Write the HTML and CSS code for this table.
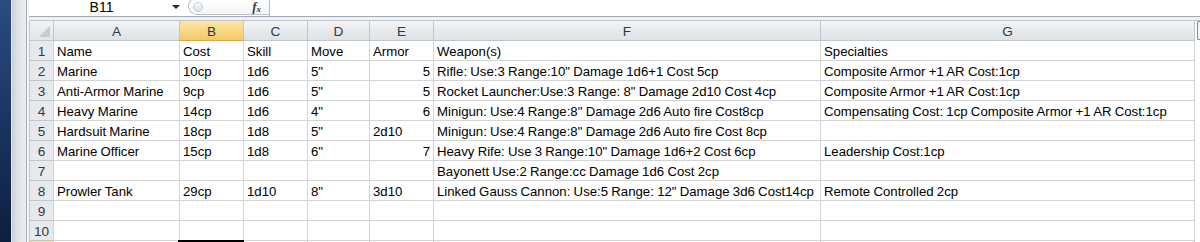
FILE: index.html
```html
<!DOCTYPE html>
<html>
<head>
<meta charset="utf-8">
<link rel="stylesheet" href="styles.css">
</head>
<body>
<div class="window">
  <div class="frame-left">
    <div class="desk"></div>
    <div class="edge-light"></div>
    <div class="edge-gray"></div>
    <div class="edge-dark"></div>
    <div class="edge-white"></div>
  </div>
  <div class="app">
    <div class="formula-bar">
      <div class="namebox"><span class="name">B11</span><span class="arrow"></span></div>
      <div class="fx-box"><span class="knob"></span><span class="fx"><i>f</i><sub>x</sub></span></div>
      <div class="formula-input"></div>
    </div>
    <div class="sep"></div>
    <div class="sheet-area">
      <div class="sheet">
        <div class="corner"><span class="tri"></span></div>
        <div class="ch">A</div><div class="ch sel">B</div><div class="ch">C</div><div class="ch">D</div><div class="ch">E</div><div class="ch">F</div><div class="ch last">G</div>

        <div class="rh">1</div><div class="c">Name</div><div class="c">Cost</div><div class="c">Skill</div><div class="c">Move</div><div class="c">Armor</div><div class="c">Weapon(s)</div><div class="c last">Specialties</div>

        <div class="rh">2</div><div class="c">Marine</div><div class="c">10cp</div><div class="c">1d6</div><div class="c">5&quot;</div><div class="c num">5</div><div class="c">Rifle: Use:3 Range:10&quot; Damage 1d6+1 Cost 5cp</div><div class="c last">Composite Armor +1 AR Cost:1cp</div>

        <div class="rh">3</div><div class="c">Anti-Armor Marine</div><div class="c">9cp</div><div class="c">1d6</div><div class="c">5&quot;</div><div class="c num">5</div><div class="c">Rocket Launcher:Use:3 Range: 8&quot; Damage 2d10 Cost 4cp</div><div class="c last">Composite Armor +1 AR Cost:1cp</div>

        <div class="rh">4</div><div class="c">Heavy Marine</div><div class="c">14cp</div><div class="c">1d6</div><div class="c">4&quot;</div><div class="c num">6</div><div class="c">Minigun: Use:4 Range:8&quot; Damage 2d6 Auto fire Cost8cp</div><div class="c last">Compensating Cost: 1cp Composite Armor +1 AR Cost:1cp</div>

        <div class="rh">5</div><div class="c">Hardsuit Marine</div><div class="c">18cp</div><div class="c">1d8</div><div class="c">5&quot;</div><div class="c">2d10</div><div class="c">Minigun: Use:4 Range:8&quot; Damage 2d6 Auto fire Cost 8cp</div><div class="c last"></div>

        <div class="rh">6</div><div class="c">Marine Officer</div><div class="c">15cp</div><div class="c">1d8</div><div class="c">6&quot;</div><div class="c num">7</div><div class="c">Heavy Rife: Use 3 Range:10&quot; Damage 1d6+2 Cost 6cp</div><div class="c last">Leadership Cost:1cp</div>

        <div class="rh">7</div><div class="c"></div><div class="c"></div><div class="c"></div><div class="c"></div><div class="c"></div><div class="c">Bayonett Use:2 Range:cc Damage 1d6 Cost 2cp</div><div class="c last"></div>

        <div class="rh">8</div><div class="c">Prowler Tank</div><div class="c">29cp</div><div class="c">1d10</div><div class="c">8&quot;</div><div class="c">3d10</div><div class="c">Linked Gauss Cannon: Use:5 Range: 12&quot; Damage 3d6 Cost14cp</div><div class="c last">Remote Controlled 2cp</div>

        <div class="rh">9</div><div class="c"></div><div class="c"></div><div class="c"></div><div class="c"></div><div class="c"></div><div class="c"></div><div class="c last"></div>

        <div class="rh">10</div><div class="c"></div><div class="c"></div><div class="c"></div><div class="c"></div><div class="c"></div><div class="c"></div><div class="c last"></div>

        <div class="rh sel">11</div><div class="c"></div><div class="c active"></div><div class="c"></div><div class="c"></div><div class="c"></div><div class="c"></div><div class="c last"></div>
      </div>
      <div class="vscroll"><div class="vbtn"></div></div>
    </div>
  </div>
</div>
</body>
</html>
```
FILE: styles.css
```css
html, body {
  margin: 0;
  padding: 0;
  background: #ffffff;
  overflow: hidden;
}

.window {
  display: flex;
  width: 1200px;
  height: 242px;
  overflow: hidden;
  font-family: "Liberation Sans", Arial, sans-serif;
}

.frame-left {
  display: flex;
  flex: 0 0 29px;
  height: 100%;
}
.desk {
  width: 11px;
  background: linear-gradient(to bottom, #2b4c7e 0%, #1a3563 50%, #0d1f3d 100%);
}
.edge-light { width: 1px; background: #e6eaef; }
.edge-gray {
  width: 14px;
  background: linear-gradient(to right, #c9cfd7 0%, #dfe3e8 40%, #eceef1 100%);
}
.edge-dark { width: 1px; background: #a5adb8; }
.edge-white { width: 2px; background: #f7f8f9; }

.app {
  flex: 1;
  display: flex;
  flex-direction: column;
  min-width: 0;
}

/* formula bar */
.formula-bar {
  display: flex;
  height: 16px;
  background: #ffffff;
  align-items: flex-start;
}
.namebox {
  width: 155px;
  height: 16px;
  display: flex;
  align-items: center;
}
.name {
  flex: 1;
  text-align: center;
  font-size: 14px;
  line-height: 16px;
  color: #000;
  margin-top: -2px;
  padding-left: 2px;
}
.arrow {
  width: 0;
  height: 0;
  border-left: 4px solid transparent;
  border-right: 4px solid transparent;
  border-top: 4px solid #2a2a2a;
  margin: -3px 4px 0 0;
}
.fx-box {
  width: 81px;
  height: 18px;
  margin: -3px 0 0 4px;
  box-sizing: border-box;
  border: 1px solid #bcc1c8;
  border-right: none;
  border-radius: 9px 0 0 9px;
  background: linear-gradient(to bottom, #ffffff, #f4f5f7);
  display: flex;
  align-items: center;
}
.knob {
  width: 8px;
  height: 8px;
  margin: 2px 0 0 4px;
  border-radius: 50%;
  border: 1px solid #c4c8ce;
  background: linear-gradient(to bottom, #f8f9fa, #dcdfe3);
}
.fx {
  margin: 3px 0 0 auto;
  padding-right: 8px;
  font-family: "Liberation Serif", "Times New Roman", serif;
  font-size: 13px;
  line-height: 13px;
  color: #3a3a3a;
  font-weight: bold;
}
.fx i { font-style: italic; }
.fx sub {
  font-size: 9px;
  font-style: italic;
  vertical-align: -1px;
}
.formula-input {
  flex: 1;
  height: 16px;
  border-left: 1px solid #b5bac1;
  background: #fff;
}

.sep {
  height: 3px;
  border-top: 1px solid #a3aab4;
  border-bottom: 1px solid #c3c8cf;
  background: #eef0f3;
}

/* sheet */
.sheet-area {
  display: flex;
  flex: 1;
  min-height: 0;
}
.sheet {
  display: grid;
  grid-template-columns: 24px 126px 64px 64px 62px 64px 387px 375px;
  grid-auto-rows: 20px;
  font-size: 13.2px;
  word-spacing: -0.4px;
  color: #000;
}
.sheet > div {
  box-sizing: border-box;
  border-left: 1px solid #d4d4d4;
  border-bottom: 1px solid #d4d4d4;
  white-space: nowrap;
  line-height: 21px;
  height: 20px;
}
.sheet > div.last {
  border-right: 1px solid #d4d4d4;
}

.corner {
  background: linear-gradient(to bottom, #f2f3f5, #e1e4e8);
  position: relative;
}
.sheet > .corner,
.sheet > .ch,
.sheet > .rh {
  border-left-color: #c1c6cd;
  border-bottom-color: #c1c6cd;
}
.tri {
  position: absolute;
  right: 3px;
  bottom: 3px;
  width: 0;
  height: 0;
  border-left: 11px solid transparent;
  border-bottom: 11px solid #c9cdd3;
}
.ch {
  text-align: center;
  color: #2c3a4c;
  font-size: 13.6px;
  background: linear-gradient(to bottom, #f3f4f6 0%, #e6e8ec 60%, #dee1e5 100%);
}
.sheet > .ch.last { border-right-color: #c1c6cd; }
.sheet > .ch.sel {
  background: linear-gradient(to bottom, #fbe5a7 0%, #f8d886 50%, #f2c968 100%);
  border-bottom-color: #e2a53a;
}
.rh {
  text-align: center;
  color: #2c3a4c;
  font-size: 13.6px;
  background: #e7e9ec;
}
.sheet > .rh.sel {
  background: linear-gradient(to bottom, #fbe3a0, #f4ca67);
}
.c {
  padding: 0 3px;
  background: #fff;
}
.c.num { text-align: right; }
.c.active {
  outline: 2px solid #000;
  outline-offset: -1px;
  position: relative;
}

.vscroll {
  flex: 1;
  background: #fff;
}
.vbtn {
  margin: 0 0 0 2px;
  height: 19px;
  box-sizing: border-box;
  border: 1px solid #80868f;
  border-right: none;
  border-radius: 2px 0 0 2px;
  background: #f4f5f7;
}
```
